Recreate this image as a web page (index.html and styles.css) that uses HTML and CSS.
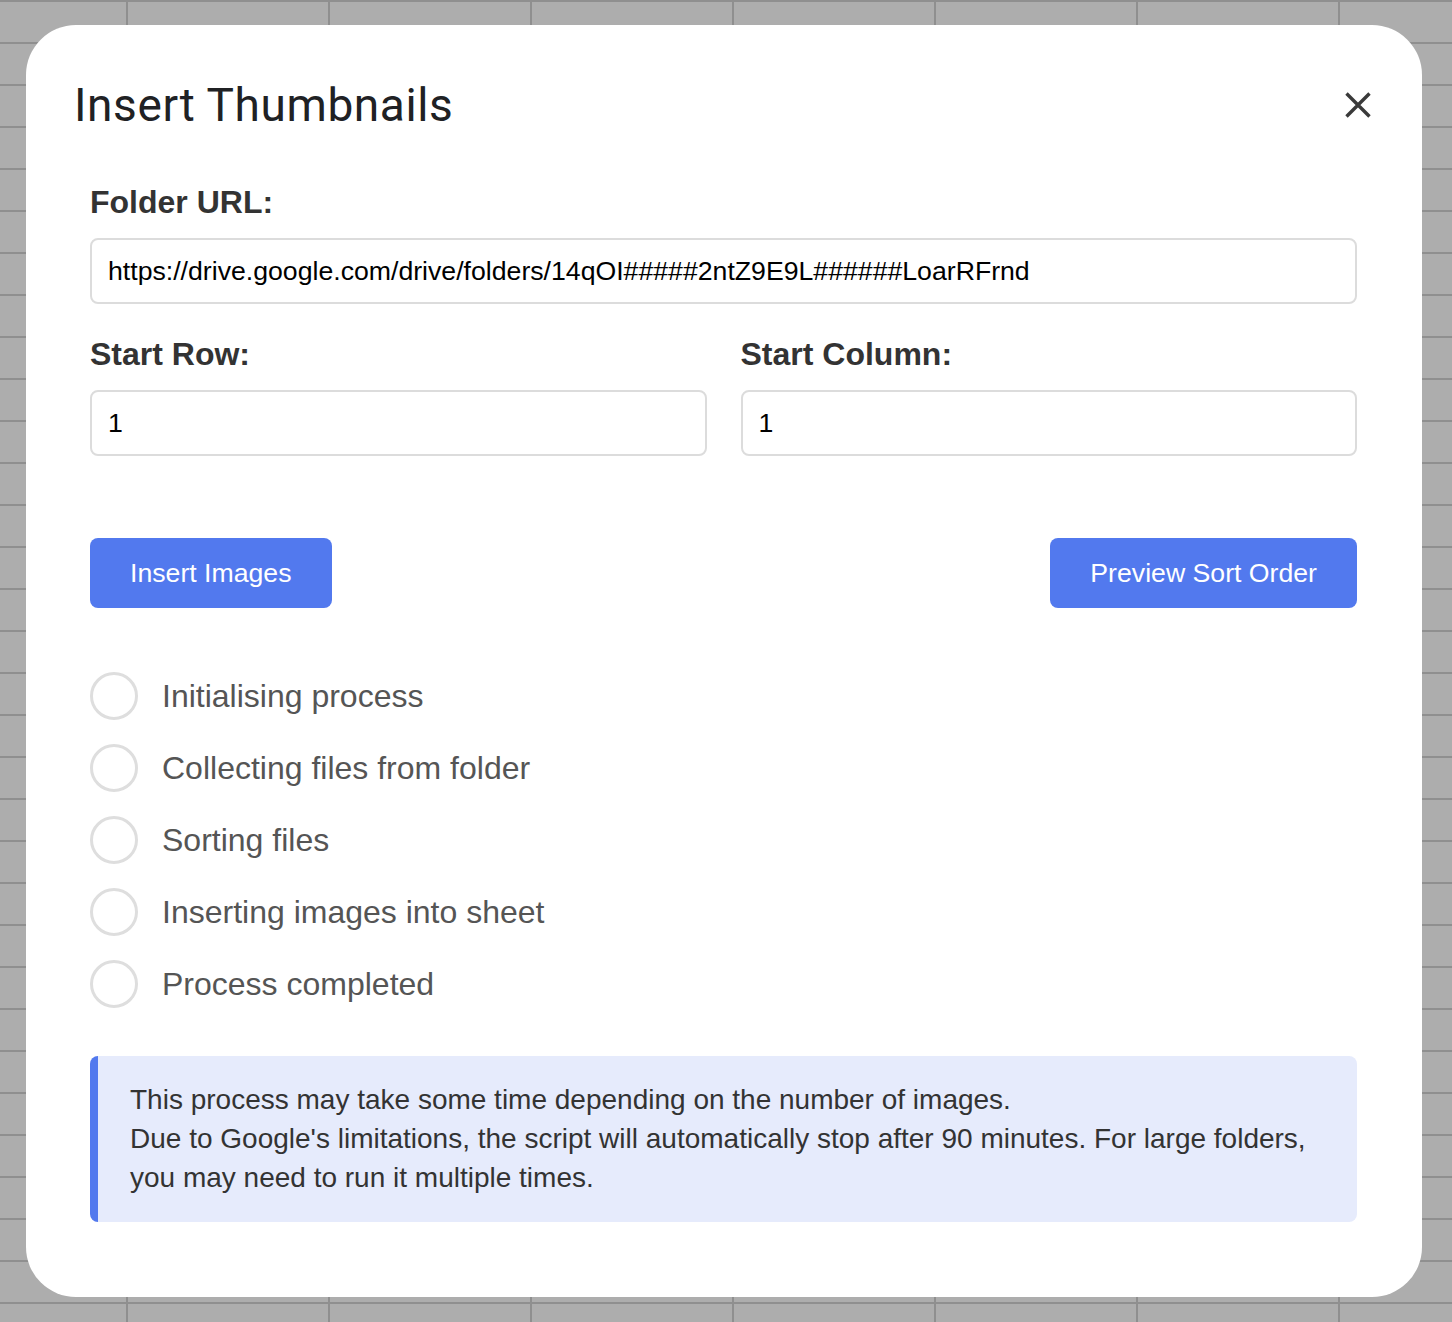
FILE: index.html
```html
<!DOCTYPE html>
<html lang="en">
<head>
<meta charset="utf-8">
<title>Insert Thumbnails</title>
<link rel="stylesheet" href="styles.css">
</head>
<body>
<div class="sheet">
  <div class="modal">
    <div class="modal-header">
      <h1 class="modal-title">Insert Thumbnails</h1>
      <button class="close-btn" aria-label="Close">
        <svg width="26" height="26" viewBox="0 0 26 26"><path d="M1.5 1.5 L24.5 24.5 M24.5 1.5 L1.5 24.5" stroke="#3a3a3a" stroke-width="3.4" fill="none"/></svg>
      </button>
    </div>
    <div class="modal-body">
      <label class="field-label">Folder URL:</label>
      <input class="text-input" type="text" value="https://drive.google.com/drive/folders/14qOI#####2ntZ9E9L######LoarRFrnd">
      <div class="two-col">
        <div class="col">
          <label class="field-label">Start Row:</label>
          <input class="text-input" type="text" value="1">
        </div>
        <div class="col">
          <label class="field-label">Start Column:</label>
          <input class="text-input" type="text" value="1">
        </div>
      </div>
      <div class="actions">
        <button class="btn">Insert Images</button>
        <button class="btn">Preview Sort Order</button>
      </div>
      <ul class="steps">
        <li class="step"><span class="circle"></span><span class="step-text">Initialising process</span></li>
        <li class="step"><span class="circle"></span><span class="step-text">Collecting files from folder</span></li>
        <li class="step"><span class="circle"></span><span class="step-text">Sorting files</span></li>
        <li class="step"><span class="circle"></span><span class="step-text">Inserting images into sheet</span></li>
        <li class="step"><span class="circle"></span><span class="step-text">Process completed</span></li>
      </ul>
      <div class="info">
        This process may take some time depending on the number of images.<br>
        Due to Google's limitations, the script will automatically stop after 90 minutes. For large folders, you may need to run it multiple times.
      </div>
    </div>
  </div>
</div>
</body>
</html>
```

FILE: styles.css
```css
html, body {
  margin: 0;
  padding: 0;
}
body {
  width: 1452px;
  height: 1322px;
  overflow: hidden;
  background-color: #adadad;
  background-image:
    linear-gradient(to right, #8f8f8f 2px, transparent 2px),
    linear-gradient(to bottom, #8f8f8f 2px, transparent 2px);
  background-size: 202px 100%, 100% 42px;
  background-position: 126px 0, 0 0;
  font-family: "Liberation Sans", Arial, sans-serif;
}
.sheet {
  padding: 25px 30px 25px 26px;
}
.modal {
  width: 1396px;
  height: 1272px;
  box-sizing: border-box;
  background: #fff;
  border-radius: 50px;
}
.modal-header {
  display: flex;
  align-items: center;
  justify-content: space-between;
  padding: 53px 51px 0 48px;
}
.modal-title {
  margin: 0;
  font-family: Roboto, "Open Sans", sans-serif;
  font-weight: 400;
  font-size: 46px;
  line-height: 54px;
  color: #202124;
  letter-spacing: 0.6px;
}
.close-btn {
  border: 0;
  background: none;
  padding: 0;
  width: 26px;
  height: 26px;
  display: flex;
}
.modal-body {
  padding: 52px 65px 0 64px;
}
.field-label {
  display: block;
  font-weight: 700;
  font-size: 32px;
  line-height: 37px;
  color: #333;
  margin-bottom: 17px;
}
.text-input {
  display: block;
  width: 100%;
  box-sizing: border-box;
  height: 66px;
  border: 2px solid #dcdcdc;
  border-radius: 8px;
  padding: 0 16px;
  font-family: "Liberation Sans", Arial, sans-serif;
  font-size: 26.67px;
  color: #000;
  background: #fff;
  outline: none;
}
.two-col {
  display: grid;
  grid-template-columns: 1fr 1fr;
  column-gap: 34px;
  margin-top: 32px;
}
.two-col .field-label {
  margin-bottom: 17px;
}
.actions {
  display: flex;
  justify-content: space-between;
  margin-top: 82px;
}
.btn {
  height: 70px;
  padding: 0 40px;
  border: 0;
  border-radius: 8px;
  background: #5279ee;
  color: #fff;
  font-family: "Liberation Sans", Arial, sans-serif;
  font-size: 26.67px;
}
.steps {
  list-style: none;
  margin: 64px 0 0 0;
  padding: 0;
  display: flex;
  flex-direction: column;
  gap: 24px;
}
.step {
  display: flex;
  align-items: center;
  height: 48px;
}
.circle {
  width: 48px;
  height: 48px;
  box-sizing: border-box;
  border: 3px solid #dedede;
  border-radius: 50%;
  margin-right: 24px;
  flex: none;
}
.step-text {
  font-size: 32px;
  color: #555;
}
.info {
  margin-top: 48px;
  background: #e6ebfc;
  border-left: 8px solid #5279ee;
  border-radius: 8px;
  padding: 24px 40px 24px 32px;
  font-size: 28px;
  line-height: 39.2px;
  color: #333;
}
```
